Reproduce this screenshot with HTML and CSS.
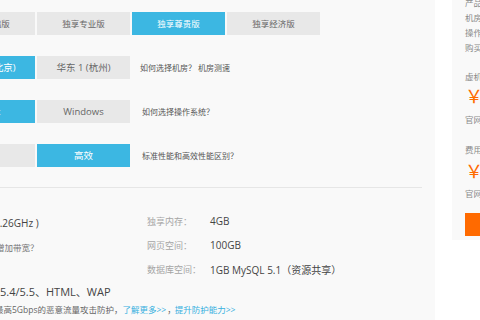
FILE: index.html
```html
<!DOCTYPE html>
<html lang="zh-CN">
<head>
<meta charset="utf-8">
<link rel="stylesheet" href="styles.css">
</head>
<body>
<div class="page">
  <main class="main">
    <div class="tabs">
      <span class="tab">独享基础版</span>
      <span class="tab">独享专业版</span>
      <span class="tab active">独享尊贵版</span>
      <span class="tab">独享经济版</span>
    </div>
    <div class="opt-row">
      <span class="opt active">华北 1 (北京)</span>
      <span class="opt">华东 1 (杭州)</span>
      <span class="help help-near">如何选择机房？ 机房测速</span>
    </div>
    <div class="opt-row">
      <span class="opt active">Linux</span>
      <span class="opt">Windows</span>
      <span class="help">如何选择操作系统？</span>
    </div>
    <div class="opt-row">
      <span class="opt">标准</span>
      <span class="opt active">高效</span>
      <span class="help">标准性能和高效性能区别？</span>
    </div>
    <hr class="divider">
    <div class="specs">
      <div class="spec-row">
        <span class="spec-left"><span class="clip-a val">2.26GHz )</span></span>
        <span class="label">独享内存：</span>
        <span class="val">4GB</span>
      </div>
      <div class="spec-row">
        <span class="spec-left"><span class="clip-b note">增加带宽？</span></span>
        <span class="label">网页空间：</span>
        <span class="val">100GB</span>
      </div>
      <div class="spec-row">
        <span class="spec-left"></span>
        <span class="label">数据库空间：</span>
        <span class="val">1GB MySQL 5.1（资源共享）</span>
      </div>
      <div class="lang-row">5.4/5.5、HTML、WAP</div>
      <div class="guard-row"><span>最高5Gbps的恶意流量攻击防护，</span><a class="link">了解更多&gt;&gt;</a><span class="comma">，</span><a class="link">提升防护能力&gt;&gt;</a></div>
    </div>
  </main>
  <div class="spacer"></div>
  <aside class="side">
    <div class="side-list">
      <div>产品名称：</div>
      <div>机房：</div>
      <div>操作系统：</div>
      <div>购买时长：</div>
    </div>
    <div class="side-title">虚机价格：</div>
    <div class="price">￥ 1200</div>
    <div class="side-note">官网价：</div>
    <div class="side-title second">费用：</div>
    <div class="price second">￥ 1200</div>
    <div class="side-note tight">官网价：</div>
    <div class="buy">立即购买</div>
  </aside>
</div>
</body>
</html>
```

FILE: styles.css
```css
html, body {
  margin: 0;
  padding: 0;
}
body {
  width: 480px;
  height: 320px;
  overflow: hidden;
  background: #ffffff;
  font-family: "Open Sans", "Noto Sans CJK SC", sans-serif;
}
.page {
  display: flex;
  align-items: flex-start;
  height: 320px;
}
.main {
  width: 422px;
  height: 320px;
  padding: 12px 13px 0 0;
  background: #f9f9f9;
  overflow: hidden;
  flex-shrink: 0;
}
.spacer {
  width: 17px;
  flex-shrink: 0;
}
.side {
  width: 120px;
  flex-shrink: 0;
  background: #f9f9f9;
  padding: 0 0 4px 13px;
  overflow: hidden;
  font-size: 8.5px;
  color: #8a8a8a;
  white-space: nowrap;
}
.tabs {
  display: flex;
  gap: 2px;
  margin-left: -58px;
}
.tab {
  width: 93px;
  height: 23px;
  line-height: 23px;
  text-align: center;
  background: #e8e8e8;
  color: #666;
  font-size: 8.5px;
  flex-shrink: 0;
}
.tab.active {
  background: #3cb7e2;
  color: #fff;
}
.opt-row {
  display: flex;
  align-items: center;
  gap: 2px;
  margin-left: -58px;
  margin-top: 21px;
}
.opt {
  width: 93px;
  height: 23px;
  line-height: 23px;
  text-align: center;
  background: #e8e8e8;
  color: #666;
  font-size: 9.5px;
  flex-shrink: 0;
  white-space: nowrap;
}
.opt.active {
  background: #3cb7e2;
  color: #fff;
}
.help {
  margin-left: 10px;
  font-size: 8px;
  color: #555;
  white-space: nowrap;
}
.help-near {
  margin-left: 8px;
}
.divider {
  border: 0;
  border-top: 1px solid #e6e6e6;
  margin: 20px 0 0 0;
  height: 0;
}
.specs {
  margin-top: 21px;
}
.spec-row {
  display: flex;
  align-items: center;
  height: 24px;
  white-space: nowrap;
}
.spec-left {
  width: 147px;
  flex-shrink: 0;
  overflow: hidden;
}
.label {
  width: 63px;
  flex-shrink: 0;
  font-size: 9px;
  color: #a5a5a5;
}
.val {
  font-size: 10px;
  color: #444;
}
.note {
  font-size: 8.5px;
  color: #777;
}
.clip-a {
  display: inline-block;
  margin-left: -6px;
}
.clip-b {
  display: inline-block;
  margin-left: -4px;
}
.lang-row {
  height: 22px;
  line-height: 22px;
  font-size: 11px;
  color: #444;
  white-space: nowrap;
}
.guard-row {
  height: 14px;
  line-height: 14px;
  font-size: 8.5px;
  color: #666;
  white-space: nowrap;
  margin-left: -5px;
}
.link {
  color: #36b0df;
}
.comma {
  display: inline-block;
  margin: 0 -1px 0 1px;
}
.side-list {
  margin-top: -5px;
  line-height: 15px;
}
.side-title {
  margin-top: 14px;
  line-height: 15px;
}
.side-title.second {
  margin-top: 15px;
}
.price {
  margin-top: 2px;
  font-size: 18px;
  line-height: 20px;
  color: #ff6a00;
}
.price.second {
  margin-top: 4px;
}
.side-note {
  margin-top: 6px;
  line-height: 15px;
}
.side-note.tight {
  margin-top: 5px;
}
.buy {
  margin-top: 12px;
  width: 80px;
  height: 23px;
  line-height: 23px;
  background: #ff6a00;
  color: #fff;
  font-size: 10px;
  text-align: center;
}
```
